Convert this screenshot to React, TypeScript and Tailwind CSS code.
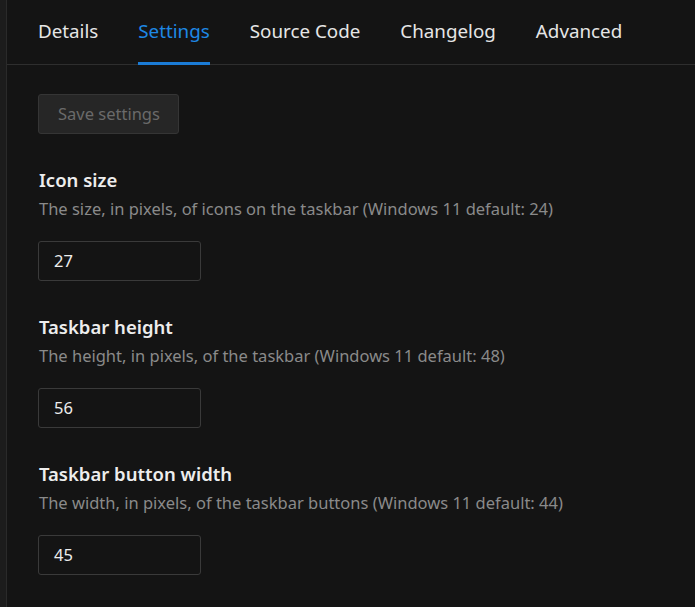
import React from "react";

const tabs = ["Details", "Settings", "Source Code", "Changelog", "Advanced"];

const fields = [
  { title: "Icon size", desc: "The size, in pixels, of icons on the taskbar (Windows 11 default: 24)", value: "27" },
  { title: "Taskbar height", desc: "The height, in pixels, of the taskbar (Windows 11 default: 48)", value: "56" },
  { title: "Taskbar button width", desc: "The width, in pixels, of the taskbar buttons (Windows 11 default: 44)", value: "45" },
];

export default function App() {
  return (
    <div
      className="flex h-[607px] w-[695px] overflow-hidden bg-[#141414]"
      style={{ fontFamily: '"Noto Sans", "Open Sans", sans-serif' }}
    >
      <div className="w-[7px] shrink-0 bg-[#1c1c1c] border-r border-[#2a2a2a]" />
      <div className="flex-1 flex flex-col">
        <div className="flex h-[65px] border-b border-[#2e2e2e] pl-[11px]">
          {tabs.map((t) => (
            <div key={t} className="relative flex items-center px-[20px] pb-[2px]">
              <span className={`text-[18.8px] ${t === "Settings" ? "text-[#1e88e5]" : "text-[#e6e6e6]"}`}>{t}</span>
              {t === "Settings" && (
                <div className="absolute left-[20px] right-[20px] bottom-[-1px] h-[3px] bg-[#1b7cd6]" />
              )}
            </div>
          ))}
        </div>
        <div className="flex flex-col pl-[31px] pt-[29px]">
          <button className="w-[141px] h-[40px] rounded-[3px] border border-[#353535] bg-[#262626] text-[16.5px] text-[#6a6a6a] text-left pl-[19px]">
            Save settings
          </button>
          {fields.map((f) => (
            <div key={f.title} className="flex flex-col mt-[34px]">
              <div className="text-[18.5px] font-semibold text-[#ededed] leading-[24px] pl-[1px]">{f.title}</div>
              <div className="text-[16.5px] text-[#8a8a8a] leading-[24px] mt-[5px] pl-[1px]">{f.desc}</div>
              <div className="mt-[20px] w-[163px] h-[40px] rounded-[3px] border border-[#3a3a3a] bg-[#141414] flex items-center pl-[15px] text-[16.5px] text-[#ececec]">
                {f.value}
              </div>
            </div>
          ))}
        </div>
      </div>
    </div>
  );
}
